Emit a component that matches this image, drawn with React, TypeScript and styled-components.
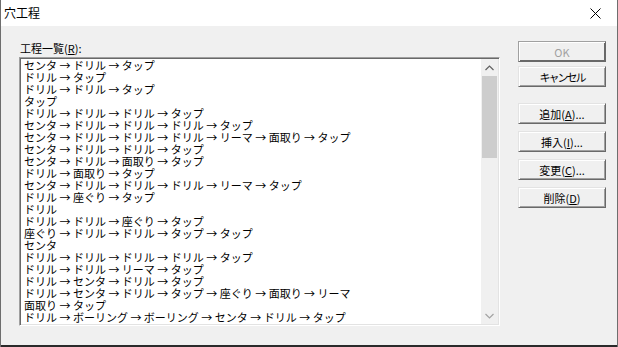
import React from "react";
import styled, { createGlobalStyle } from "styled-components";

const GlobalStyle = createGlobalStyle`
  html, body {
    margin: 0;
    padding: 0;
    background: #f0f0f0;
  }
  body {
    font-family: "Noto Sans CJK JP", "Liberation Sans", sans-serif;
    font-size: 11px;
    color: #000;
  }
`;

const processes = [
  "センタ → ドリル → タップ",
  "ドリル → タップ",
  "ドリル → ドリル → タップ",
  "タップ",
  "ドリル → ドリル → ドリル → タップ",
  "センタ → ドリル → ドリル → ドリル → タップ",
  "センタ → ドリル → ドリル → ドリル → リーマ → 面取り → タップ",
  "センタ → ドリル → ドリル → タップ",
  "センタ → ドリル → 面取り → タップ",
  "ドリル → 面取り → タップ",
  "センタ → ドリル → ドリル → ドリル → リーマ → タップ",
  "ドリル → 座ぐり → タップ",
  "ドリル",
  "ドリル → ドリル → 座ぐり → タップ",
  "座ぐり → ドリル → ドリル → タップ → タップ",
  "センタ",
  "ドリル → ドリル → ドリル → ドリル → タップ",
  "ドリル → ドリル → リーマ → タップ",
  "ドリル → センタ → ドリル → タップ",
  "ドリル → センタ → ドリル → タップ → 座ぐり → 面取り → リーマ",
  "面取り → タップ",
  "ドリル → ボーリング → ボーリング → センタ → ドリル → タップ",
  "ドリル → センタ → ドリル → ドリル → タップ → タップ",
];

const App = () => {
  return (
    <Window>
      <GlobalStyle />
      <TitleBar>
        <Title>穴工程</Title>
        <CloseButton>
          <svg width="11" height="11" viewBox="0 0 11 11">
            <path d="M0.5 0.5 L10.5 10.5 M10.5 0.5 L0.5 10.5" stroke="#000" strokeWidth="1" fill="none" />
          </svg>
        </CloseButton>
      </TitleBar>

      <Body>
        <LeftColumn>
          <Label>
            工程一覧(<u>R</u>):
          </Label>
          <ListBox>
            <Rows>
              {processes.map((p, i) => (
                <Row key={i}>{p}</Row>
              ))}
            </Rows>
            <ScrollBar>
              <ArrowButton>
                <svg width="9" height="6" viewBox="0 0 9 6">
                  <path d="M0.5 5 L4.5 1 L8.5 5" stroke="#606060" strokeWidth="1.2" fill="none" />
                </svg>
              </ArrowButton>
              <Track>
                <Thumb />
              </Track>
              <ArrowButton>
                <svg width="9" height="6" viewBox="0 0 9 6">
                  <path d="M0.5 1 L4.5 5 L8.5 1" stroke="#a3a3a3" strokeWidth="1.2" fill="none" />
                </svg>
              </ArrowButton>
            </ScrollBar>
          </ListBox>
        </LeftColumn>

        <ButtonColumn>
          <ButtonGroup>
            <Button $default disabled>OK</Button>
            <Button $narrow>キャンセル</Button>
          </ButtonGroup>
          <ButtonGroup $gap={7}>
            <Button>追加(<u>A</u>)...</Button>
            <Button>挿入(<u>I</u>)...</Button>
            <Button>変更(<u>C</u>)...</Button>
            <Button>削除(<u>D</u>)</Button>
          </ButtonGroup>
        </ButtonColumn>
      </Body>
      <BottomEdge />
    </Window>
  );
};

export default App;

const Window = styled.div`
  width: 618px;
  height: 347px;
  box-sizing: border-box;
  display: flex;
  flex-direction: column;
  background: #f0f0f0;
  border-left: 1px solid #6e6e6e;
  border-right: 1px solid #6e6e6e;
  overflow: hidden;
`;

const TitleBar = styled.div`
  height: 26px;
  flex: none;
  background: #fff;
  display: flex;
  align-items: center;
  justify-content: space-between;
  padding-left: 3px;
`;

const Title = styled.div`
  font-size: 12px;
  line-height: 14px;
  margin-top: -1px;
`;

const CloseButton = styled.div`
  width: 46px;
  height: 26px;
  display: flex;
  align-items: center;
  justify-content: center;
  margin-right: -1px;
`;

const Body = styled.div`
  flex: 1;
  display: flex;
  padding: 15px 0 0 18px;
  gap: 18px;
  min-height: 0;
`;

const LeftColumn = styled.div`
  display: flex;
  flex-direction: column;
  width: 481px;
`;

const Label = styled.div`
  height: 16px;
  line-height: 14px;
  padding-left: 1px;

  u {
    text-decoration-thickness: 1px;
    text-underline-offset: 1px;
  }
`;

const ListBox = styled.div`
  height: 269px;
  box-sizing: border-box;
  display: flex;
  background: #fff;
  border-top: 1px solid #a0a0a0;
  border-left: 1px solid #a0a0a0;
  border-bottom: 1px solid #fff;
  border-right: 1px solid #fff;
  box-shadow: inset 1px 1px 0 #696969, inset -1px -1px 0 #e3e3e3;
  padding: 1px 1px 1px 1px;
`;

const Rows = styled.div`
  flex: 1;
  overflow: hidden;
  padding-left: 3px;
`;

const Row = styled.div`
  height: 12px;
  line-height: 12px;
  white-space: nowrap;
`;

const ScrollBar = styled.div`
  width: 17px;
  flex: none;
  display: flex;
  flex-direction: column;
  background: #f0f0f0;
`;

const ArrowButton = styled.div`
  height: 17px;
  flex: none;
  display: flex;
  align-items: center;
  justify-content: center;
`;

const Track = styled.div`
  flex: 1;
  padding: 0 1px;
`;

const Thumb = styled.div`
  height: 82px;
  background: #cdcdcd;
`;

const ButtonColumn = styled.div`
  display: flex;
  flex-direction: column;
  gap: 16px;
`;

const ButtonGroup = styled.div<{ $gap?: number }>`
  display: flex;
  flex-direction: column;
  gap: ${(p) => p.$gap ?? 4}px;
`;

const Button = styled.button<{ $default?: boolean; $narrow?: boolean }>`
  width: 88px;
  height: 21px;
  box-sizing: border-box;
  padding: 0;
  margin: 0;
  font-family: "Noto Sans CJK JP", "Liberation Sans", sans-serif;
  font-size: 11px;
  line-height: 14px;
  color: #000;
  background: #f0f0f0;
  border-style: solid;
  border-width: 1px;
  border-color: ${(p) =>
    p.$default ? "#a0a0a0 #696969 #696969 #a0a0a0" : "#e3e3e3 #696969 #696969 #e3e3e3"};
  box-shadow: ${(p) =>
    p.$default
      ? "inset 1px 1px 0 #fff, inset -1px -1px 0 #696969"
      : "inset 1px 1px 0 #fff, inset -1px -1px 0 #a0a0a0"};
  letter-spacing: ${(p) => (p.$narrow ? "-2px" : "0")};
  display: flex;
  align-items: center;
  justify-content: center;

  &:disabled {
    color: #a0a0a0;
  }

  u {
    text-decoration-thickness: 1px;
    text-underline-offset: 1px;
  }
`;

const BottomEdge = styled.div`
  height: 2px;
  flex: none;
  background: #2a2a2a;
`;
